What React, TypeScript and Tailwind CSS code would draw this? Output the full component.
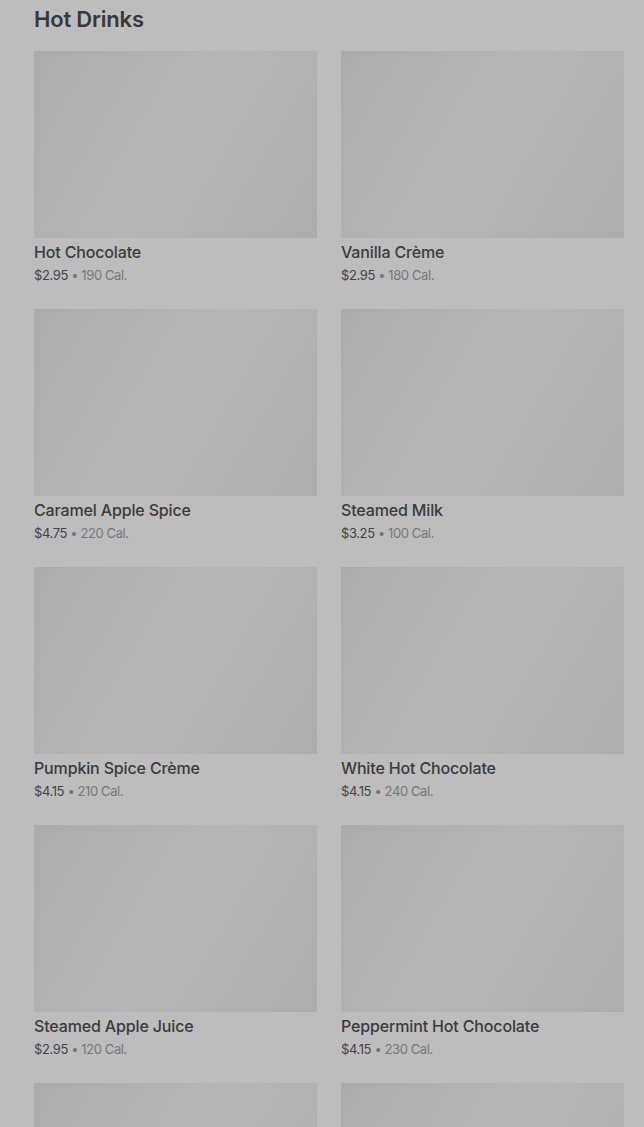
import React from "react";

const items = [
  { name: "Hot Chocolate", price: "$2.95", cal: "190 Cal." },
  { name: "Vanilla Crème", price: "$2.95", cal: "180 Cal." },
  { name: "Caramel Apple Spice", price: "$4.75", cal: "220 Cal." },
  { name: "Steamed Milk", price: "$3.25", cal: "100 Cal." },
  { name: "Pumpkin Spice Crème", price: "$4.15", cal: "210 Cal." },
  { name: "White Hot Chocolate", price: "$4.15", cal: "240 Cal." },
  { name: "Steamed Apple Juice", price: "$2.95", cal: "120 Cal." },
  { name: "Peppermint Hot Chocolate", price: "$4.15", cal: "230 Cal." },
  { name: "", price: "", cal: "" },
  { name: "", price: "", cal: "" },
];

export default function App() {
  return (
    <div
      className="h-[1127px] overflow-hidden bg-[#bdbdbd] pl-[34px] pr-[20px]"
      style={{ fontFamily: "Inter, 'Noto Sans', sans-serif" }}
    >
      <h2 className="mt-[5px] mb-[18px] text-[22px] leading-[28px] font-semibold tracking-[-0.2px] text-[#383838]">
        Hot Drinks
      </h2>
      <div className="grid grid-cols-2 gap-x-[24px] gap-y-[25px]">
        {items.map((it, i) => (
          <div key={i}>
            <div className="h-[187px] bg-[linear-gradient(120deg,#acacac_0%,#b6b6b6_50%,#adadad_100%)]" />
            {it.name && (
              <>
                <div className="mt-[4px] text-[16px] leading-[20px] font-medium tracking-[-0.15px] text-[#3b3b3b]">
                  {it.name}
                </div>
                <div className="mt-[4px] text-[13px] leading-[18px] tracking-[-0.4px]">
                  <span className="text-[#444444]">{it.price}</span>
                  <span className="text-[#777777]"> • {it.cal}</span>
                </div>
              </>
            )}
          </div>
        ))}
      </div>
    </div>
  );
}
